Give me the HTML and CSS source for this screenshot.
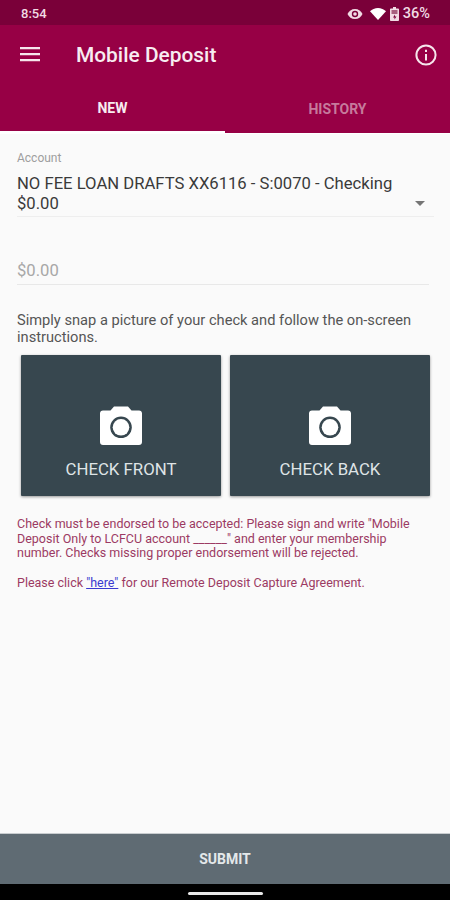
FILE: index.html
```html
<!DOCTYPE html>
<html>
<head>
	<meta charset="utf-8">
	<title>Mobile Deposit</title>
	<link rel="stylesheet" href="styles.css">
</head>
<body>
	<div class="app">
		<div class="status">
			<span class="time">8:54</span>
			<div class="status-icons">
				<svg class="ic-eye" width="16" height="12" viewBox="0 0 16 12"><path fill="#f1dbe4" d="M8 1C4.6 1 1.800 3 .5 6c1.300 3 4.100 5 7.500 5s6.200-2 7.500-5C14.200 3 11.400 1 8 1z"/><circle cx="8" cy="6" r="3.200" fill="#7a0039"/><circle cx="8" cy="6" r="1.800" fill="#f1dbe4"/></svg>
				<svg class="ic-wifi" width="16" height="12" viewBox="0 0 16 12"><path fill="#fff" d="M0 3.200C2 1.300 4.900 0 8 0s6 1.300 8 3.200L8 12z"/></svg>
				<svg class="ic-batt" width="9" height="14" viewBox="0 0 9 14"><path fill="#f1dbe4" d="M3 0h3v1.500h2.200c.4 0 .8.400.8.800v10.900c0 .4-.4.800-.8.800H.8c-.4 0-.8-.4-.8-.8V2.300c0-.4.400-.8.800-.8H3z"/><path fill="#a8607f" d="M1.500 3h6v4h-6z"/><path fill="#7a0039" d="M5 7.500 3 10.500h1.500V12.500l2-3H5z"/></svg>
				<span class="pct">36%</span>
			</div>
		</div>
		<header class="toolbar">
			<svg class="menu" width="20" height="16" viewBox="0 0 20 16"><path fill="#f6e6ec" d="M0 1h20v2.200H0zM0 7h20v2.200H0zM0 13h20v2.200H0z"/></svg>
			<h1 class="title">Mobile Deposit</h1>
			<svg class="info" width="22" height="22" viewBox="0 0 22 22"><circle cx="11" cy="11" r="9.600" fill="none" stroke="#f6e6ec" stroke-width="2"/><path fill="#f6e6ec" d="M10 10h2v6.500h-2zM10 5.800h2v2.200h-2z"/></svg>
		</header>
		<nav class="tabs">
			<div class="tab active">NEW</div>
			<div class="tab">HISTORY</div>
		</nav>
		<main class="content">
			<div class="field-account">
				<div class="label">Account</div>
				<div class="select">
					<div class="select-text">NO FEE LOAN DRAFTS XX6116 - S:0070 - Checking<br>$0.00</div>
					<span class="caret"></span>
				</div>
			</div>
			<div class="amount">$0.00</div>
			<p class="intro">Simply snap a picture of your check and follow the on-screen instructions.</p>
			<div class="cards">
				<div class="card">
					<svg class="cam" width="44" height="40" viewBox="0 0 44 40"><path fill="#fff" d="M15 1.500h14l3.500 4H40c1.800 0 3 1.200 3 3V37c0 1.800-1.200 3-3 3H4c-1.800 0-3-1.200-3-3V8.500c0-1.800 1.200-3 3-3h7.500z"/><circle cx="22" cy="22.300" r="10.800" fill="#37474f"/><circle cx="22" cy="22.300" r="8.300" fill="#fff"/></svg>
					<span class="card-label">CHECK FRONT</span>
				</div>
				<div class="card">
					<svg class="cam" width="44" height="40" viewBox="0 0 44 40"><path fill="#fff" d="M15 1.500h14l3.500 4H40c1.800 0 3 1.200 3 3V37c0 1.800-1.200 3-3 3H4c-1.800 0-3-1.200-3-3V8.500c0-1.800 1.200-3 3-3h7.500z"/><circle cx="22" cy="22.300" r="10.800" fill="#37474f"/><circle cx="22" cy="22.300" r="8.300" fill="#fff"/></svg>
					<span class="card-label">CHECK BACK</span>
				</div>
			</div>
			<p class="note">Check must be endorsed to be accepted: Please sign and write "Mobile Deposit Only to LCFCU account ______" and enter your membership number. Checks missing proper endorsement will be rejected.</p>
			<p class="note note-link">Please click <a href="#">"here"</a> for our Remote Deposit Capture Agreement.</p>
		</main>
		<div class="submit">SUBMIT</div>
		<div class="navbar"><span class="pill"></span></div>
	</div>
</body>
</html>
```
FILE: styles.css
```css
*{margin: 0;padding: 0;box-sizing: border-box;}
html,body{height: 100%;}
body{font-family: Roboto, "Liberation Sans", sans-serif;background: #fafafa;}
.app{width: 450px;height: 900px;display: flex;flex-direction: column;overflow: hidden;}

.status{height: 25px;background: #7a0039;color: #f1dbe4;display: flex;align-items: center;justify-content: space-between;padding: 2px 20px 0 21px;flex: none;}
.time{font-size: 13px;font-weight: 500;}
.status-icons{display: flex;align-items: center;gap: 4px;}
.ic-eye{margin-right: 3px;}
.pct{font-size: 14.500px;font-weight: 500;}

.toolbar{height: 58px;background: #970045;display: flex;align-items: center;padding: 0 13px 0 20px;flex: none;}
.menu{flex: none;}
.title{font-size: 20.900px;font-weight: 500;color: #f8ecf1;margin-left: 36px;flex: 1;padding-top: 1px;}
.info{flex: none;margin-top: 1px;}

.tabs{height: 51px;background: #970045;display: flex;flex: none;}
.tab{width: 50%;display: flex;align-items: center;justify-content: center;font-size: 14px;font-weight: 700;color: #c67a9c;padding-top: 2px;border-bottom: 1px solid #fff;}
.tabs .active{color: #f8ecf1;border-bottom: 3px solid #fff;}

.content{flex: 1;padding: 17px 17px 0;}
.label{font-size: 12px;color: #9e9e9e;}
.select{display: flex;align-items: flex-end;border-bottom: 1px solid #eee;margin-top: 9px;padding-bottom: 2px;width: 417px;}
.select-text{flex: 1;font-size: 16.650px;line-height: 20px;color: #3a3a3a;}
.caret{width: 0;height: 0;border-left: 5px solid transparent;border-right: 5px solid transparent;border-top: 5px solid #757575;margin: 0 9px 8px 0;}
.amount{font-size: 16.650px;line-height: 20px;color: #a8a8a8;margin-top: 44px;padding-bottom: 3px;border-bottom: 1px solid #e8e8e8;width: 412px;}
.intro{font-size: 14.650px;line-height: 17px;color: #555;margin-top: 27px;}

.cards{display: flex;gap: 9px;margin: 9px 3px 0 4px;}
.card{width: 200px;height: 141px;background: #37474f;display: flex;flex-direction: column;align-items: center;box-shadow: 0 1px 3px rgba(0,0,0,.4);border-radius: 1px;padding-top: 50px;}
.cam{flex: none;}
.card-label{font-size: 16.800px;color: #dfe4e6;margin-top: 14px;}

.note{font-size: 12.500px;line-height: 14.500px;color: #9c3a63;}
.cards + .note{margin-top: 21px;}
.note-link{margin-top: 15px;}
.note a{color: #3a3ad0;}

.submit{height: 51px;background: #5f6b73;color: #e4e8ea;display: flex;align-items: center;justify-content: center;font-size: 14px;font-weight: 700;flex: none;border-top: 1px solid #c8cccf;}
.navbar{height: 16px;background: #000;display: flex;justify-content: center;flex: none;}
.pill{width: 75px;height: 3px;background: #e8e8e8;border-radius: 2px;margin-top: 8px;}
```
